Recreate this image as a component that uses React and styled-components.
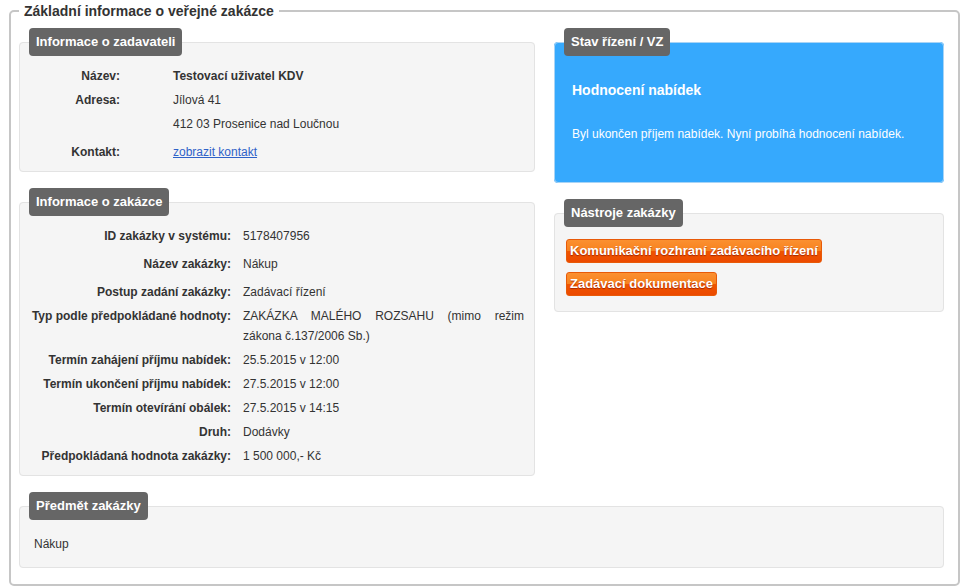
import React from 'react';
import styled, { createGlobalStyle } from 'styled-components';

const GlobalStyle = createGlobalStyle`
  body {
    margin: 0;
    background: #fff;
    color: #333;
    font-family: "Liberation Sans", Arial, sans-serif;
    font-size: 12px;
  }
`;

const Outer = styled.fieldset`
  margin: 0 4px 0 9px;
  padding: 6px 14px 16px 8px;
  border: 2px solid #c6c6c6;
  border-radius: 5px;
  min-inline-size: 0;
`;

const OuterLegend = styled.legend`
  padding: 0 5px;
  font-size: 14px;
  font-weight: bold;
  line-height: 22px;
  color: #333;
`;

const Columns = styled.div`
  display: grid;
  grid-template-columns: 516px 390px;
  column-gap: 19px;
  align-items: start;
`;

const Column = styled.div`
  display: flex;
  flex-direction: column;
  gap: 16px;
`;

const Panel = styled.fieldset`
  margin: ${(p) => (p.$top ? `${p.$top}px` : 0)} 0 0;
  padding: ${(p) => p.$pt}px 10px ${(p) => p.$pb}px ${(p) => p.$pl}px;
  min-inline-size: 0;
  border: 1px solid ${(p) => (p.$blue ? '#a8d4f6' : '#e3e3e3')};
  border-radius: 4px;
  background: ${(p) => (p.$blue ? '#36a9fd' : '#f5f5f5')};
  color: ${(p) => (p.$blue ? '#fff' : '#333')};

  & > legend {
    margin-left: ${(p) => 9 - p.$pl}px;
  }
`;

const PanelTitle = styled.legend`
  padding: 0 7px;
  background: #666;
  color: #fff;
  font-size: 13px;
  font-weight: bold;
  line-height: 28px;
  border-radius: 4px;
`;

const InfoGrid = styled.div`
  display: grid;
  grid-template-columns: ${(p) => p.$labelWidth}px 1fr;
  column-gap: ${(p) => p.$gap}px;
  line-height: 20px;
`;

const Label = styled.div`
  padding: ${(p) => p.$pt ?? 2}px 0 ${(p) => p.$pb ?? 2}px;
  text-align: right;
  font-weight: bold;
  color: #333;
  white-space: nowrap;
`;

const Value = styled.div`
  padding: ${(p) => p.$pt ?? 2}px 0 ${(p) => p.$pb ?? 2}px;
  font-weight: ${(p) => (p.$bold ? 'bold' : 'normal')};
  text-align: ${(p) => (p.$justify ? 'justify' : 'left')};
  color: #333;
`;

const Link = styled.a`
  color: #2f62c8;
  text-decoration: underline;
  cursor: pointer;
`;

const Field = ({ label, pt, pb, bold, justify, children }) => (
  <>
    <Label $pt={pt} $pb={pb}>{label}</Label>
    <Value $pt={pt} $pb={pb} $bold={bold} $justify={justify}>
      {children}
    </Value>
  </>
);

const StateTitle = styled.h3`
  margin: 24px 0 24px;
  font-size: 14px;
  font-weight: bold;
  line-height: 20px;
`;

const StateText = styled.p`
  margin: 0;
  line-height: 20px;
`;

const Tools = styled.div`
  display: flex;
  flex-direction: column;
  align-items: flex-start;
  gap: 9px;
`;

const OrangeButton = styled.button`
  padding: 0 3px;
  border: 1px solid #e85a08;
  border-radius: 3px;
  background: linear-gradient(#fb9030 0%, #f7821f 48%, #ef5500 52%, #ec4a00 100%);
  color: #fff;
  font-family: "Liberation Sans", Arial, sans-serif;
  font-size: 13px;
  font-weight: bold;
  line-height: 22px;
  text-shadow: 0 1px 1px rgba(150, 30, 0, 0.85);
  cursor: pointer;
`;

const Subject = styled.div`
  line-height: 20px;
`;

export default function App() {
  return (
    <>
      <GlobalStyle />
      <Outer>
        <OuterLegend>Základní informace o veřejné zakázce</OuterLegend>
        <Columns>
          <Column>
            <Panel $pt={8} $pb={7} $pl={10}>
              <PanelTitle>Informace o zadavateli</PanelTitle>
              <InfoGrid $labelWidth={90} $gap={53}>
                <Field label="Název:" bold>Testovací uživatel KDV</Field>
                <Field label="Adresa:">Jílová 41</Field>
                <Field label="">412 03 Prosenice nad Loučnou</Field>
                <Field label="Kontakt:" pt={6}>
                  <Link>zobrazit kontakt</Link>
                </Field>
              </InfoGrid>
            </Panel>
            <Panel $pt={8} $pb={7} $pl={10}>
              <PanelTitle>Informace o zakázce</PanelTitle>
              <InfoGrid $labelWidth={201} $gap={12}>
                <Field label="ID zakázky v systému:">5178407956</Field>
                <Field label="Název zakázky:" pt={6} pb={2}>Nákup</Field>
                <Field label="Postup zadání zakázky:" pt={6} pb={2}>Zadávací řízení</Field>
                <Field label="Typ podle předpokládané hodnoty:" justify>
                  ZAKÁZKA MALÉHO ROZSAHU (mimo režim zákona{'\u00a0'}č.137/2006 Sb.)
                </Field>
                <Field label="Termín zahájení příjmu nabídek:">25.5.2015 v 12:00</Field>
                <Field label="Termín ukončení příjmu nabídek:">27.5.2015 v 12:00</Field>
                <Field label="Termín otevírání obálek:">27.5.2015 v 14:15</Field>
                <Field label="Druh:">Dodávky</Field>
                <Field label="Předpokládaná hodnota zakázky:">1 500 000,- Kč</Field>
              </InfoGrid>
            </Panel>
          </Column>
          <Column>
            <Panel $blue $pt={0} $pb={38} $pl={17}>
              <PanelTitle>Stav řízení / VZ</PanelTitle>
              <StateTitle>Hodnocení nabídek</StateTitle>
              <StateText>Byl ukončen příjem nabídek. Nyní probíhá hodnocení nabídek.</StateText>
            </Panel>
            <Panel $pt={12} $pb={15} $pl={11}>
              <PanelTitle>Nástroje zakázky</PanelTitle>
              <Tools>
                <OrangeButton>Komunikační rozhraní zadávacího řízení</OrangeButton>
                <OrangeButton>Zadávací dokumentace</OrangeButton>
              </Tools>
            </Panel>
          </Column>
        </Columns>
        <Panel $top={16} $pt={14} $pb={13} $pl={14}>
          <PanelTitle>Předmět zakázky</PanelTitle>
          <Subject>Nákup</Subject>
        </Panel>
      </Outer>
    </>
  );
}
